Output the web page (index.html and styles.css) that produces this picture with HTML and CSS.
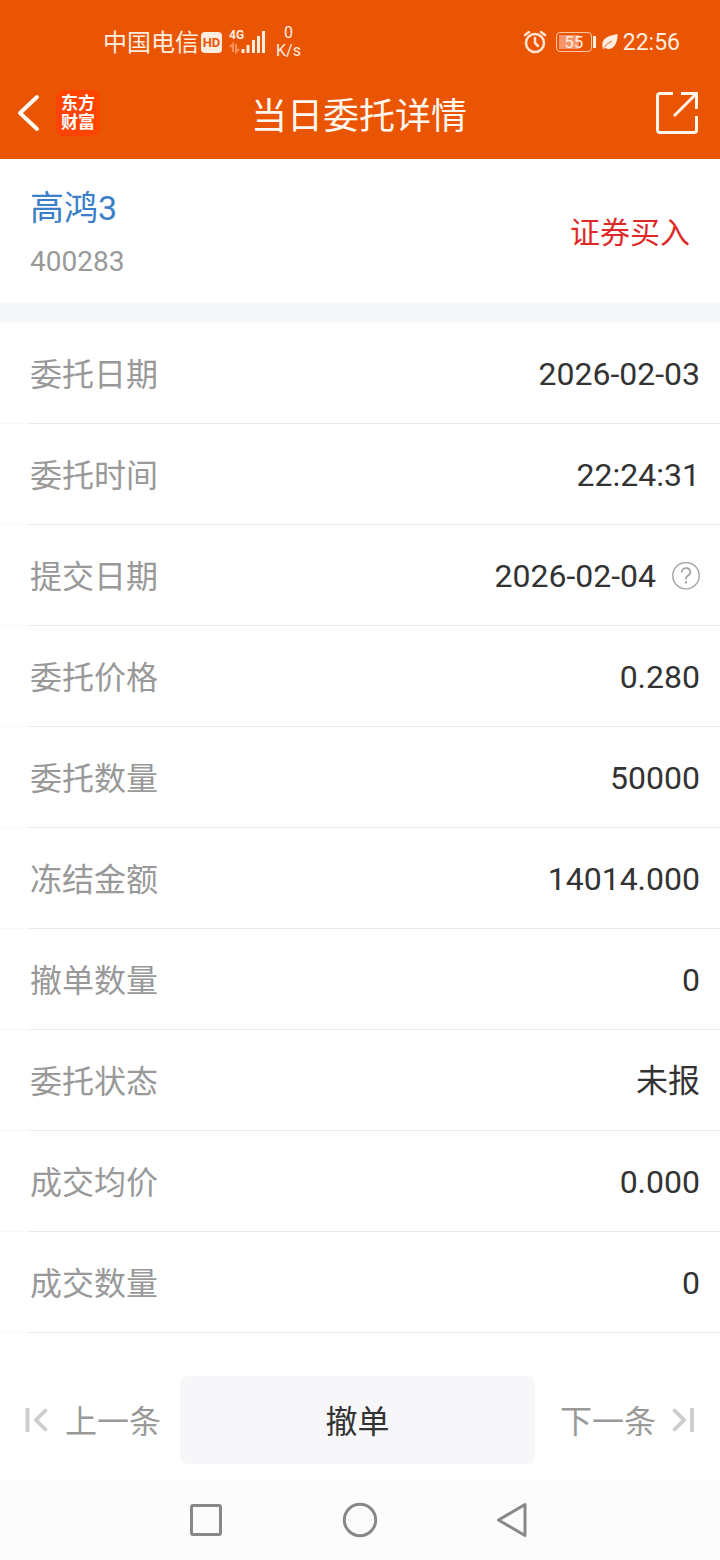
FILE: index.html
```html
<!DOCTYPE html>
<html lang="zh-CN">
<head>
<meta charset="utf-8">
<meta name="viewport" content="width=device-width, initial-scale=1">
<title>当日委托详情</title>
<link rel="stylesheet" href="styles.css">
</head>
<body>
<header class="top">
  <div class="status">
    <div class="status-left">
      <span class="carrier">中国电信</span>
      <span class="hd">HD</span>
      <div class="signal">
        <span class="net">4G</span>
        <svg width="38" height="26" viewBox="0 0 38 26" aria-hidden="true">
          <path d="M1 18l3-3v8M7 15v8l3-3" fill="none" stroke="#ff9058" stroke-width="2"/>
          <path d="M14 20v4M19 16v8M24.500 11v13M29.500 7v17M34.500 2v22" fill="none" stroke="#ffede0" stroke-width="3"/>
        </svg>
      </div>
      <div class="speed"><span>0</span><span>K/s</span></div>
    </div>
    <div class="status-right">
      <svg class="alarm" width="24" height="24" viewBox="0 0 24 24" fill="none" stroke="#ffe6d5" stroke-width="2.500" stroke-linecap="round" aria-hidden="true">
        <circle cx="12" cy="13" r="9"/><path d="M12 8v5l3 3M2 5l4-3M22 5l-4-3"/>
      </svg>
      <div class="battery"><span class="level">55</span></div>
      <svg class="leaf" width="16" height="18" viewBox="0 0 16 18" aria-hidden="true">
        <path d="M1 16C-2 7 4 3 15.500 1C16 11 10 19 3 15z" fill="#ffede0"/>
        <path d="M2 14.500Q5 10 10 8" fill="none" stroke="#ea5504" stroke-width="0.900"/>
      </svg>
      <time class="clock">22:56</time>
    </div>
  </div>
  <div class="titlebar">
    <div class="brand">
      <button class="icon-btn" type="button" aria-label="返回">
        <svg width="24" height="38" viewBox="0 0 24 38" fill="none" stroke="#fff8f0" stroke-width="4" stroke-linecap="round" stroke-linejoin="round"><path d="M21 3L4 19L21 35"/></svg>
      </button>
      <div class="logo"><span>东方</span><span>财富</span></div>
    </div>
    <h1 class="title">当日委托详情</h1>
    <button class="icon-btn share" type="button" aria-label="分享">
      <svg width="44" height="44" viewBox="0 0 44 44" fill="none" stroke="#fff5ea" stroke-width="3"><path d="M17 2.500H4Q1.500 2.500 1.500 5V39Q1.500 41.500 4 41.500H38Q40.500 41.500 40.500 39V25M25 2.500H40.500V18M40 3L18 25"/></svg>
    </button>
  </div>
</header>

<main class="content">
  <section class="stock">
    <div class="stock-id">
      <a class="stock-name" href="#">高鸿3</a>
      <span class="stock-code">400283</span>
    </div>
    <span class="side">证券买入</span>
  </section>
  <dl class="details">
    <div class="row"><dt>委托日期</dt><dd>2026-02-03</dd></div>
    <div class="row"><dt>委托时间</dt><dd>22:24:31</dd></div>
    <div class="row"><dt>提交日期</dt><dd>2026-02-04
      <button class="icon-btn" type="button" aria-label="说明">
        <svg width="28" height="28" viewBox="0 0 28 28" fill="none" stroke="#a3a3a3"><circle cx="14" cy="13.700" r="13.200" stroke-width="1.400"/><path d="M9.700 10.500Q9.700 6.200 14 6.200T18.300 10.500Q18.300 12 16 13.500T14 17.500" stroke-width="1.800"/><path d="M14 19.300v2.200" stroke-width="2.200"/></svg>
      </button></dd></div>
    <div class="row"><dt>委托价格</dt><dd>0.280</dd></div>
    <div class="row"><dt>委托数量</dt><dd>50000</dd></div>
    <div class="row"><dt>冻结金额</dt><dd>14014.000</dd></div>
    <div class="row"><dt>撤单数量</dt><dd>0</dd></div>
    <div class="row"><dt>委托状态</dt><dd>未报</dd></div>
    <div class="row"><dt>成交均价</dt><dd>0.000</dd></div>
    <div class="row"><dt>成交数量</dt><dd>0</dd></div>
  </dl>
</main>

<footer>
  <div class="actions">
    <button class="step" type="button">
      <svg width="24" height="24" viewBox="0 0 24 24" fill="none" stroke="#ccc" stroke-width="3.800" aria-hidden="true"><path d="M2.500 0v24M21.500 1.500L11 12L21.500 22.500"/></svg>
      <span class="label">上一条</span>
    </button>
    <button class="cancel" type="button">撤单</button>
    <button class="step step-next" type="button">
      <span class="label">下一条</span>
      <svg width="24" height="24" viewBox="0 0 24 24" fill="none" stroke="#ccc" stroke-width="3.800" aria-hidden="true"><path d="M20 0v24M1.500 1.500L12 12L1.500 22.500"/></svg>
    </button>
  </div>
  <nav class="sysnav">
    <button class="icon-btn" type="button" aria-label="最近任务"><svg width="36" height="36" viewBox="0 0 36 36" fill="none" stroke="#888" stroke-width="3"><rect x="3.500" y="3.500" width="29" height="29" rx="1.500"/></svg></button>
    <button class="icon-btn" type="button" aria-label="主页"><svg width="36" height="36" viewBox="0 0 36 36" fill="none" stroke="#888" stroke-width="3"><circle cx="18" cy="18" r="15.700"/></svg></button>
    <button class="icon-btn" type="button" aria-label="后退"><svg width="36" height="36" viewBox="0 0 36 36" fill="none" stroke="#888" stroke-width="3" stroke-linejoin="round"><path d="M29 2.500V33.500L2.500 18z"/></svg></button>
  </nav>
</footer>
</body>
</html>
```
FILE: styles.css
```css
* {
  box-sizing: border-box;
}

body {
  margin: 0;
  min-height: 100vh;
  display: flex;
  flex-direction: column;
  background: #fff;
  color: #333;
  font-family: Roboto, "Noto Sans CJK SC", sans-serif;
}

button {
  margin: 0;
  padding: 0;
  border: 0;
  background: none;
  color: inherit;
  font: inherit;
  cursor: pointer;
}

svg {
  display: block;
  flex: none;
}

.icon-btn {
  display: flex;
}

.top {
  padding: 16px 20px 23px 16px;
  background: #ea5504;
  color: #ffede0;
}

.status {
  display: flex;
  justify-content: space-between;
  align-items: center;
  height: 52px;
  padding: 0 20px 0 87px;
}

.status-left,
.status-right {
  display: flex;
  align-items: center;
}

.carrier {
  padding-top: 2px;
  font-size: 24px;
  line-height: 32px;
}

.hd {
  width: 21px;
  height: 21px;
  margin-left: 2px;
  border-radius: 4px;
  background: #ffede0;
  color: #ea5504;
  font-size: 13px;
  line-height: 21px;
  font-weight: 700;
  text-align: center;
}

.signal {
  position: relative;
  margin-left: 7px;
}

.net {
  position: absolute;
  top: 0;
  left: 0;
  font-size: 12px;
  line-height: 12px;
  font-weight: 700;
}

.speed {
  display: flex;
  flex-direction: column;
  align-items: center;
  margin-left: 9px;
  font-size: 16px;
  line-height: 18px;
}

.battery {
  position: relative;
  width: 36px;
  height: 20px;
  margin: 0 6px 0 9px;
  border: 1px solid #ffc6a3;
  border-radius: 4px;
  background: linear-gradient(to right, #f59468 20px, transparent 20px) 2px 2px / 31px 14px no-repeat;
}

.battery::after {
  content: "";
  position: absolute;
  top: 3px;
  right: -5px;
  width: 3px;
  height: 12px;
  background: #ffede0;
}

.level {
  display: block;
  font-size: 17px;
  line-height: 18px;
  text-align: center;
}

.leaf {
  margin: 0 5px 0 4px;
}

.clock {
  padding-top: 2px;
  font-size: 23px;
  line-height: 32px;
}

.titlebar {
  display: grid;
  grid-template-columns: 1fr auto 1fr;
  align-items: center;
  height: 68px;
  padding-top: 22px;
}

.brand {
  display: flex;
  align-items: center;
  gap: 16px;
}

.logo {
  display: flex;
  flex-direction: column;
  align-items: center;
  justify-content: center;
  width: 44px;
  height: 46px;
  border-radius: 8px;
  background: #ff4300;
  color: #fff;
  font-size: 17px;
  line-height: 19px;
  font-weight: 700;
}

.title {
  margin: 0;
  padding: 8px 0 0 2px;
  color: #fff8f0;
  font-size: 36px;
  line-height: 38px;
  font-weight: 400;
}

.share {
  justify-self: end;
}

.content {
  flex: 1;
}

.stock {
  display: flex;
  justify-content: space-between;
  align-items: center;
  padding: 25px 30px 21px;
}

.stock-id {
  display: flex;
  flex-direction: column;
  gap: 10px;
}

.stock-name {
  color: #3a7fc8;
  font-size: 34px;
  line-height: 48px;
  text-decoration: none;
}

.stock-code {
  color: #999;
  font-size: 28px;
  line-height: 40px;
}

.side {
  color: #dd2a28;
  font-size: 30px;
  line-height: 40px;
}

.details {
  margin: 0;
  border-top: 20px solid #f6f7fa;
}

.row {
  display: flex;
  justify-content: space-between;
  align-items: center;
  height: 101px;
  padding: 2px 20px 0 30px;
  border-bottom: 1px solid #ebebeb;
  border-image: linear-gradient(to right, #f8f8f8 30px, #ebebeb 30px) 1;
  font-size: 32px;
  line-height: 48px;
}

.row dt {
  padding-top: 2px;
  color: #999;
}

.row dd {
  display: flex;
  align-items: center;
  gap: 16px;
  margin: 0;
}

.actions {
  display: grid;
  grid-template-columns: 1fr 2fr 1fr;
  align-items: center;
  padding: 16px 0;
}

.step {
  display: flex;
  align-items: center;
  gap: 16px;
  padding-left: 25px;
  color: #999;
  font-size: 32px;
  line-height: 48px;
}

.step .label {
  padding-top: 4px;
}

.step-next {
  justify-content: flex-end;
  padding: 0 24px 0 0;
}

.cancel {
  height: 88px;
  margin-right: 5px;
  padding-top: 4px;
  border-radius: 8px;
  background: #f7f7fa;
  font-size: 32px;
  line-height: 48px;
}

.sysnav {
  display: flex;
  justify-content: center;
  align-items: center;
  gap: 118px;
  height: 80px;
  background: #fcfcfc;
}
```
